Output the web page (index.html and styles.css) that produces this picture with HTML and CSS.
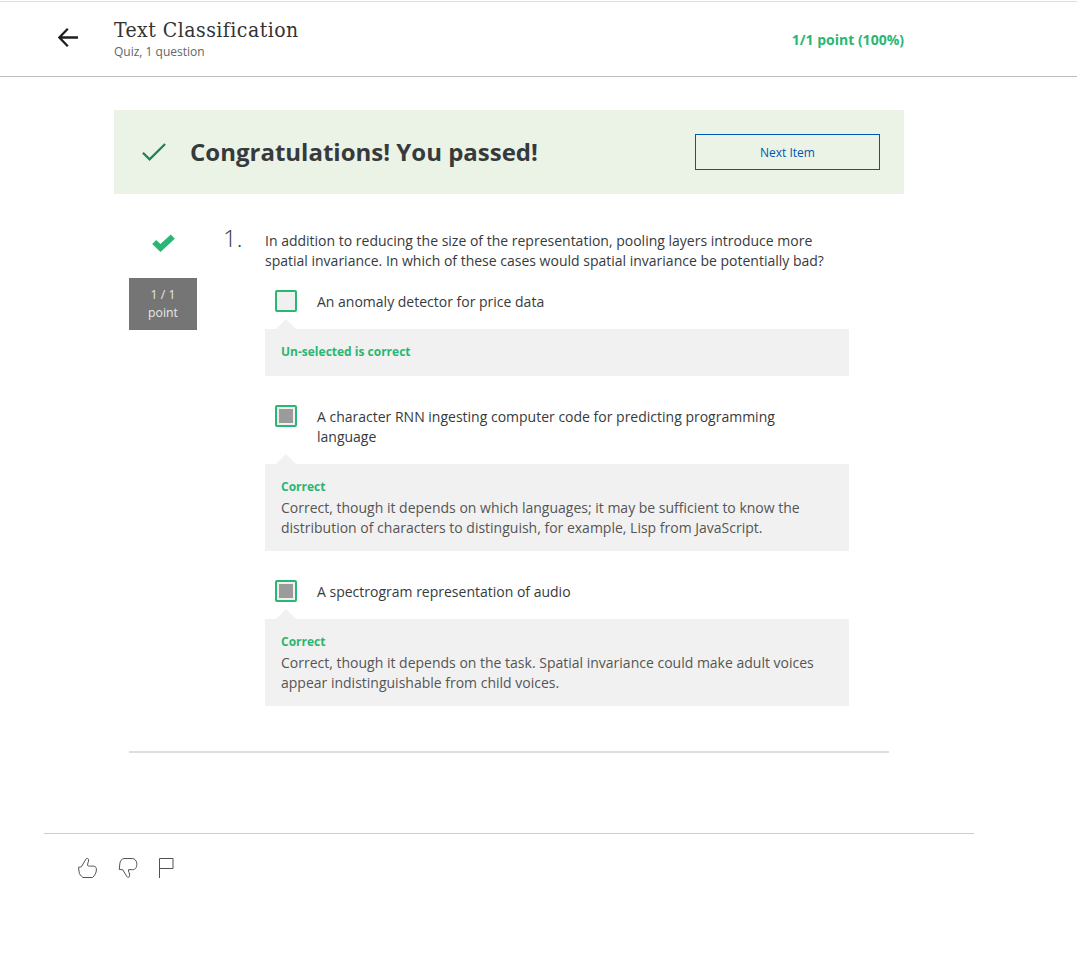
FILE: index.html
```
<!DOCTYPE html>
<html lang="en">
<head>
<meta charset="utf-8">
<title>Text Classification</title>
<link rel="stylesheet" href="styles.css">
</head>
<body>
<header class="header">
  <svg class="back" width="20" height="20" viewBox="0 0 20 20"><path d="M20 9.5H1.6M9.8 .8L1.4 9.5L9.8 18.2" fill="none" stroke="#1f1f1f" stroke-width="2.3"/></svg>
  <div class="heading">
    <h1 class="title">Text Classification</h1>
    <div class="subtitle">Quiz, 1 question</div>
  </div>
  <div class="score">1/1 point (100%)</div>
</header>
<main class="content">
  <section class="banner">
    <svg class="banner-check" width="24" height="19" viewBox="0 0 24 19"><path d="M.9 9.7L7.6 16.4L23.1 1" fill="none" stroke="#1f8354" stroke-width="2.3"/></svg>
    <h2 class="banner-title">Congratulations! You passed!</h2>
    <button class="next">Next Item</button>
  </section>
  <section class="question">
    <div class="result">
      <svg class="result-check" width="24" height="18" viewBox="0 0 24 18"><path d="M3.2 8L9.5 14L21.8 2.6" fill="none" stroke="#2ab673" stroke-width="5.8"/></svg>
      <div class="points">1 / 1<br>point</div>
    </div>
    <div class="number">1.</div>
    <div class="body">
      <p class="prompt">In addition to reducing the size of the representation, pooling layers introduce more<br>spatial invariance. In which of these cases would spatial invariance be potentially bad?</p>
      <div class="option">
        <span class="box"></span>
        <span class="label">An anomaly detector for price data</span>
      </div>
      <div class="feedback">
        <div class="verdict">Un-selected is correct</div>
      </div>
      <div class="option">
        <span class="box checked"></span>
        <span class="label">A character RNN ingesting computer code for predicting programming<br>language</span>
      </div>
      <div class="feedback">
        <div class="verdict">Correct</div>
        <p class="note">Correct, though it depends on which languages; it may be sufficient to know the<br>distribution of characters to distinguish, for example, Lisp from JavaScript.</p>
      </div>
      <div class="option">
        <span class="box checked"></span>
        <span class="label">A spectrogram representation of audio</span>
      </div>
      <div class="feedback">
        <div class="verdict">Correct</div>
        <p class="note">Correct, though it depends on the task. Spatial invariance could make adult voices<br>appear indistinguishable from child voices.</p>
      </div>
    </div>
  </section>
</main>
<footer class="footer">
  <svg class="icon" width="20" height="22" viewBox="0 0 20 22"><path d="M.5 10.3L3.4 9.8L8 2C8.6 .9 10.4 1.3 10.6 2.6C10.8 4.4 9.3 6.6 9.6 8.4C9.8 9.3 11 9.1 12.6 9.1H15.6C17.8 9.3 18.6 10.9 18.4 13C18.2 15.6 17.1 18.2 14.6 20.5H5C2.6 18.4 1.4 17.5 1.1 14.9Z"/></svg>
  <svg class="icon" width="20" height="22" viewBox="0 0 20 22"><path d="M1.3 12.5L1.8 6.8C2.1 4 3.5 2 5.9 1.5H14.2C16.7 1.7 18.4 3.4 18.8 6.2C19.1 9.8 17.6 12.7 14.8 12.7H10.5C9.8 14.6 12.2 16.2 11.6 18.8C11.3 20.6 9.5 20.8 8.8 19.4L4.7 12.7Z"/></svg>
  <svg class="icon" width="16" height="22" viewBox="0 0 16 22"><path d="M1.5 21V1.5H15V11.5H1.5"/></svg>
</footer>
</body>
</html>
```
FILE: styles.css
```
* { box-sizing: border-box; }
body {
  margin: 0;
  padding-top: 1px;
  background: #fff;
  color: #373a3c;
  font: 14px/20px "Open Sans", sans-serif;
  white-space: nowrap;
}
h1, h2, p { margin: 0; }
svg { display: block; flex: none; }
.header {
  display: flex;
  align-items: flex-start;
  height: 76px;
  padding: 0 173px 0 58px;
  border-top: 1px solid #dedede;
  border-bottom: 1px solid #bdbdbd;
}
.back { margin: 26px 36px 0 0; }
.heading { flex: 1; padding-top: 14px; }
.title {
  color: #333;
  font: 400 21px/28px "DejaVu Serif Condensed", "DejaVu Serif", serif;
  font-stretch: condensed;
  letter-spacing: .48px;
}
.subtitle { font-size: 12px; line-height: 16px; color: #666; }
.score { padding-top: 28px; color: #2ab673; font-weight: 700; }
.content { width: 790px; margin: 33px 0 0 114px; }
.banner {
  display: flex;
  align-items: center;
  height: 84px;
  padding: 0 24px 0 28px;
  background: #ebf3e7;
}
.banner-title { flex: 1; padding-left: 24px; font-size: 24px; line-height: 32px; font-weight: 700; }
.next {
  width: 185px;
  height: 36px;
  padding: 2px 0 0;
  border: 1px solid #0156b3;
  background: none;
  color: #0156b3;
  font: 12px/18px "Open Sans", sans-serif;
}
.question {
  display: flex;
  align-items: flex-start;
  height: 559px;
  margin: 0 15px;
  padding-top: 37px;
  border-bottom: 2px solid #dedede;
}
.result { width: 68px; }
.result-check { margin: 3px 0 0 22px; }
.points {
  height: 52px;
  margin-top: 26px;
  padding-top: 8px;
  background: #757575;
  color: #e8e8e8;
  font-size: 12.25px;
  line-height: 18px;
  text-align: center;
}
.number { width: 68px; padding-left: 26px; font-size: 24px; line-height: 14px; font-weight: 300; }
.body { width: 584px; }
.option { display: flex; align-items: flex-start; padding: 19px 0 17px 10px; }
.box {
  width: 22px;
  height: 22px;
  margin-right: 20px;
  border: 2px solid #2ab673;
  border-radius: 2px;
  background: #f0f0f0;
}
.checked { padding: 2px; }
.checked::before { content: ""; display: block; width: 14px; height: 14px; background: #9b9b9b; }
.label { padding-top: 2px; }
.feedback {
  position: relative;
  min-height: 47px;
  margin-bottom: 10px;
  padding: 13px 16px 13px;
  background: #f1f1f1;
}
.feedback::before {
  content: "";
  position: absolute;
  top: -10px;
  left: 11px;
  border: solid transparent;
  border-width: 0 10px 10px;
  border-bottom-color: #f1f1f1;
}
.verdict { color: #2ab673; font-size: 12px; line-height: 20px; font-weight: 700; }
.note { padding-top: 1px; color: #555; }
.footer {
  display: flex;
  gap: 20px;
  width: 930px;
  margin: 80px 0 0 44px;
  padding: 23px 0 0 34px;
  border-top: 1px solid #ccc;
}
.icon { fill: none; stroke: #4f5358; stroke-width: 1; }
```
